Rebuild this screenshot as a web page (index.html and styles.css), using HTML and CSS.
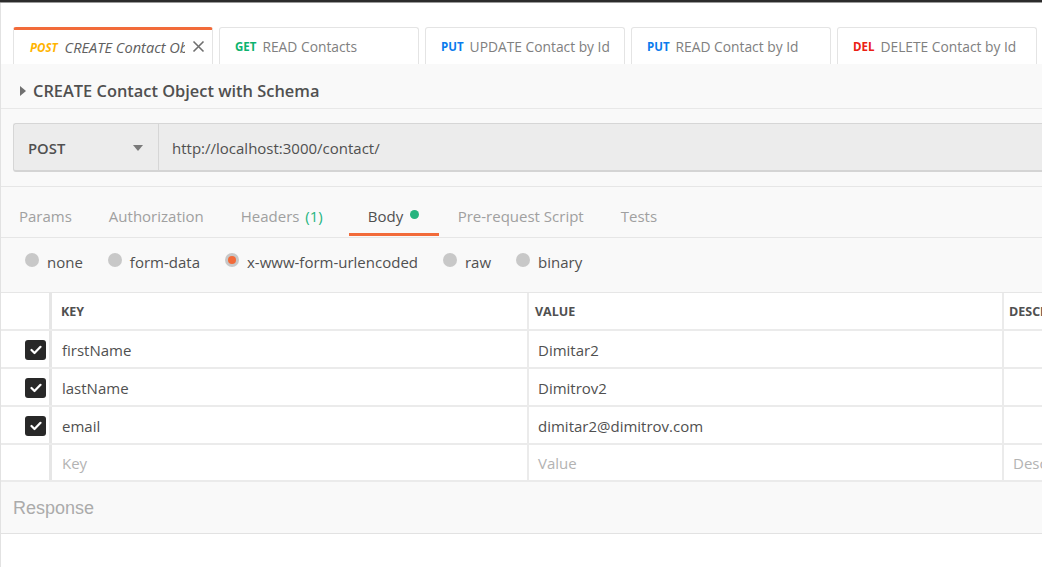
FILE: index.html
```html
<!DOCTYPE html>
<html>
<head>
<meta charset="utf-8">
<link rel="stylesheet" href="styles.css">
</head>
<body>
<div class="topbar"></div>
<div class="page">
  <div class="tabstrip">
    <div class="tab active">
      <span class="m m-post">POST</span>
      <span class="tname">CREATE Contact Object with Schema</span>
      <svg class="close" width="13" height="13" viewBox="0 0 13 13"><path d="M1.5 1.5 L11.5 11.5 M11.5 1.5 L1.5 11.5" stroke="#6f6f6f" stroke-width="1.6" fill="none"/></svg>
    </div>
    <div class="tab"><span class="m m-get">GET</span><span class="tname">READ Contacts</span></div>
    <div class="tab"><span class="m m-put">PUT</span><span class="tname">UPDATE Contact by Id</span></div>
    <div class="tab"><span class="m m-put">PUT</span><span class="tname">READ Contact by Id</span></div>
    <div class="tab"><span class="m m-del">DEL</span><span class="tname">DELETE Contact by Id</span></div>
  </div>
  <div class="main">
    <div class="titlerow">
      <svg class="caret" width="6" height="10" viewBox="0 0 6 10"><path d="M0 0 L6 5 L0 10 Z" fill="#707070"/></svg>
      <span class="title">CREATE Contact Object with Schema</span>
    </div>
    <div class="urlbar">
      <div class="method">
        <span>POST</span>
        <svg width="10" height="6" viewBox="0 0 10 6"><path d="M0 0 L10 0 L5 6 Z" fill="#7a7a7a"/></svg>
      </div>
      <div class="url">http://localhost:3000/contact/</div>
    </div>
    <div class="reqtabs">
      <div class="rt">Params</div>
      <div class="rt">Authorization</div>
      <div class="rt">Headers&nbsp;<span class="green">(1)</span></div>
      <div class="rt on">Body<span class="dot"></span></div>
      <div class="rt">Pre-request Script</div>
      <div class="rt">Tests</div>
    </div>
    <div class="radios">
      <div class="radio"><span class="circ"></span>none</div>
      <div class="radio"><span class="circ"></span>form-data</div>
      <div class="radio"><span class="circ sel"></span>x-www-form-urlencoded</div>
      <div class="radio"><span class="circ"></span>raw</div>
      <div class="radio"><span class="circ"></span>binary</div>
    </div>
    <div class="table">
      <div class="row head">
        <div class="c0"></div>
        <div class="c1">KEY</div>
        <div class="c2">VALUE</div>
        <div class="c3">DESCRIPTION</div>
      </div>
      <div class="row">
        <div class="c0"><span class="cb"><svg width="12" height="10" viewBox="0 0 12 10"><path d="M1.5 5 L4.5 8 L10.5 1.8" stroke="#fff" stroke-width="2.2" fill="none" stroke-linecap="round" stroke-linejoin="round"/></svg></span></div>
        <div class="c1">firstName</div>
        <div class="c2">Dimitar2</div>
        <div class="c3"></div>
      </div>
      <div class="row">
        <div class="c0"><span class="cb"><svg width="12" height="10" viewBox="0 0 12 10"><path d="M1.5 5 L4.5 8 L10.5 1.8" stroke="#fff" stroke-width="2.2" fill="none" stroke-linecap="round" stroke-linejoin="round"/></svg></span></div>
        <div class="c1">lastName</div>
        <div class="c2">Dimitrov2</div>
        <div class="c3"></div>
      </div>
      <div class="row">
        <div class="c0"><span class="cb"><svg width="12" height="10" viewBox="0 0 12 10"><path d="M1.5 5 L4.5 8 L10.5 1.8" stroke="#fff" stroke-width="2.2" fill="none" stroke-linecap="round" stroke-linejoin="round"/></svg></span></div>
        <div class="c1">email</div>
        <div class="c2">dimitar2@dimitrov.com</div>
        <div class="c3"></div>
      </div>
      <div class="row last">
        <div class="c0"></div>
        <div class="c1 ph">Key</div>
        <div class="c2 ph">Value</div>
        <div class="c3 ph">Description</div>
      </div>
    </div>
    <div class="response">Response</div>
  </div>
</div>
</body>
</html>
```

FILE: styles.css
```css
html, body {
  margin: 0;
  padding: 0;
}
body {
  width: 1042px;
  height: 567px;
  overflow: hidden;
  background: #ffffff;
  font-family: "Open Sans", "Noto Sans", sans-serif;
  color: #505050;
}
.topbar {
  height: 2px;
  background: #2c2c2c;
  border-bottom: 1px solid #9a9a9a;
}
.page {
  border-left: 1px solid #e2e2e2;
  height: 564px;
  overflow: hidden;
}
.tabstrip {
  display: flex;
  gap: 6px;
  padding: 24px 0 0 12px;
  background: #ffffff;
  height: 37px;
}
.tab {
  flex: 0 0 200px;
  box-sizing: border-box;
  height: 37px;
  border: 1px solid #e4e4e4;
  border-bottom: none;
  border-radius: 3px 3px 0 0;
  background: #fff;
  display: flex;
  align-items: center;
  padding: 0 0 0 15px;
  white-space: nowrap;
  overflow: hidden;
}
.tab.active {
  border-top: 3px solid #f26b3a;
  padding-left: 16px;
}
.m {
  font-size: 11.5px;
  font-weight: 700;
  margin-right: 6px;
}
.m-post { color: #ffb400; font-style: italic; margin-right: 7px; }
.m-get { color: #0cb36e; }
.m-put { color: #097bed; }
.m-del { color: #eb2013; }
.tname {
  font-size: 13.8px;
  color: #808080;
}
.tab.active .tname {
  font-style: italic;
  font-size: 14.6px;
  color: #606060;
  overflow: hidden;
  flex: 0 0 120px;
  width: 120px;
}
.close {
  margin-left: 7px;
  flex: 0 0 13px;
  margin-top: -1px;
}
.main {
  background: #f9f9f9;
}
.titlerow {
  height: 45px;
  box-sizing: border-box;
  padding: 9px 0 0 19px;
  border-bottom: 1px solid #e8e8e8;
  display: flex;
  align-items: center;
  gap: 7px;
}
.caret { margin-top: 1px; }
.title {
  font-size: 16.4px;
  font-weight: 600;
  color: #505050;
}
.urlbar {
  margin: 14px 0 0 12px;
  display: flex;
  height: 49px;
  box-sizing: border-box;
  border: 1px solid #d6d6d6;
  border-bottom: 2px solid #d4d4d4;
  border-right: none;
  border-radius: 3px 0 0 3px;
  background: #ececec;
}
.method {
  width: 145px;
  box-sizing: border-box;
  border-right: 1px solid #d6d6d6;
  display: flex;
  align-items: center;
  justify-content: space-between;
  padding: 2px 15px 0 14px;
  font-size: 14.8px;
  font-weight: 600;
  color: #505050;
}
.url {
  display: flex;
  align-items: center;
  padding: 2px 0 0 13px;
  font-size: 15px;
  color: #505050;
}
.reqtabs {
  margin-top: 14px;
  border-top: 1px solid #e6e6e6;
  border-bottom: 1px solid #e6e6e6;
  height: 50px;
  display: flex;
}
.rt {
  padding: 12px 18.5px 0;
  display: flex;
  align-items: center;
  font-size: 15px;
  color: #a0a0a0;
  box-sizing: border-box;
  border-bottom: 3px solid transparent;
  margin-bottom: 1px;
  white-space: nowrap;
}
.rt:first-child { padding-left: 18px; }
.rt.on {
  color: #505050;
  border-bottom-color: #f26b3a;
  margin-left: 8px;
  padding-right: 20px;
}
.green { color: #26b47f; padding-left: 2px; }
.dot {
  width: 9px;
  height: 9px;
  border-radius: 50%;
  background: #26b47f;
  display: inline-block;
  margin: 0 0 3px 7px;
}
.radios {
  height: 54px;
  display: flex;
  align-items: center;
  gap: 25px;
  padding: 0 0 6px 24px;
  box-sizing: border-box;
}
.radio {
  display: flex;
  align-items: center;
  gap: 8px;
  font-size: 15px;
  color: #505050;
}
.circ {
  width: 14px;
  height: 14px;
  border-radius: 50%;
  background: #c8c8c8;
  display: inline-flex;
  align-items: center;
  justify-content: center;
  margin-top: -5px;
}
.circ.sel::after {
  content: "";
  width: 8px;
  height: 8px;
  border-radius: 50%;
  background: #f26b3a;
}
.table {
  background: #fff;
  border-top: 1px solid #e6e6e6;
}
.row {
  display: grid;
  grid-template-columns: 51px 477px 475px 1fr;
  height: 38px;
  border-bottom: 2px solid #ebebeb;
  box-sizing: border-box;
}
.row.last { height: 37px; }
.row > div {
  display: flex;
  align-items: center;
  font-size: 15px;
  color: #505050;
  white-space: nowrap;
  overflow: hidden;
  padding-top: 1px;
}
.c0 {
  justify-content: flex-end;
  padding-right: 3px;
  border-right: 3px solid #e6e6e6;
}
.c1 { padding-left: 10px; border-right: 2px solid #ebebeb; }
.c2 { padding-left: 9px; border-right: 2px solid #ebebeb; }
.c3 { padding-left: 9px; }
.row.head > div {
  font-size: 12.5px;
  font-weight: 700;
  color: #505050;
}
.row.head .c1 { padding-left: 9px; }
.row.head .c2 { padding-left: 6px; }
.row.head .c3 { padding-left: 5px; }
.row > div.ph { color: #b3b3b3; }
.cb {
  width: 21px;
  height: 20px;
  border-radius: 3px;
  background: #282828;
  display: flex;
  align-items: center;
  justify-content: center;
}
.response {
  height: 52px;
  border-bottom: 1px solid #e2e2e2;
  display: flex;
  align-items: center;
  padding: 1px 0 0 12px;
  box-sizing: border-box;
  font-family: "Liberation Sans", Arial, sans-serif;
  font-size: 18px;
  color: #ababab;
  background: #f9f9f9;
}
```
